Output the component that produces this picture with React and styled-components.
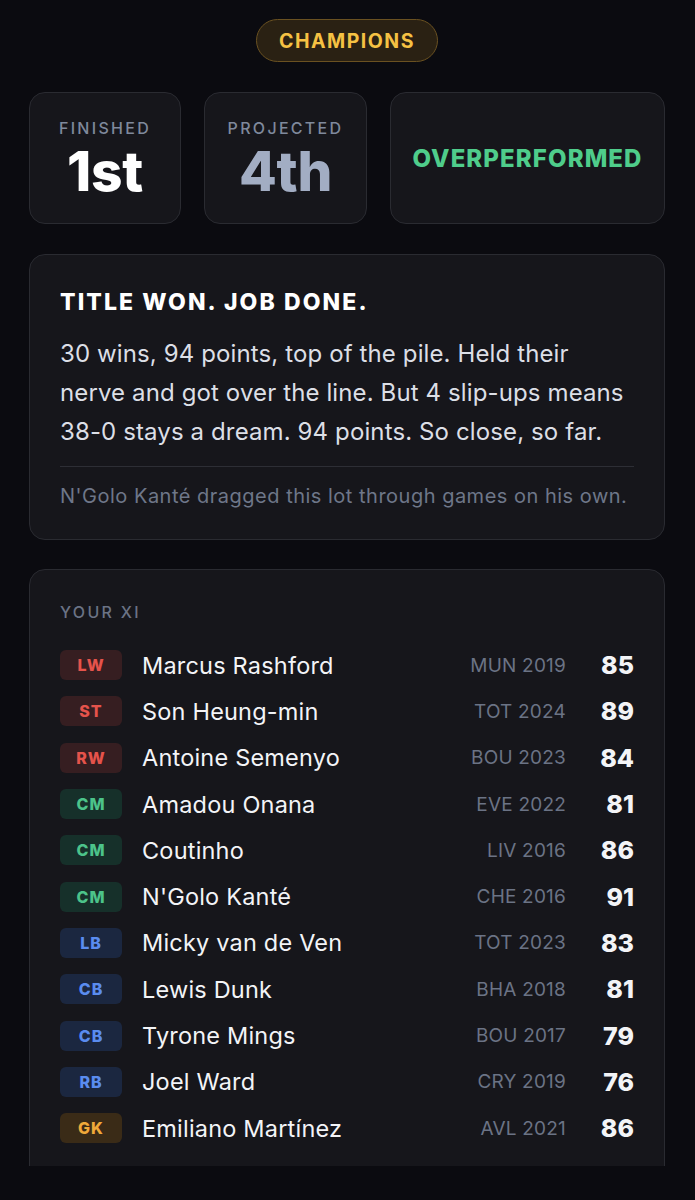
import React from 'react'
import styled, { createGlobalStyle } from 'styled-components'

const GlobalStyle = createGlobalStyle`
  html, body {
    margin: 0;
    padding: 0;
    background: #0b0b10;
  }
  body {
    font-family: Inter, "Noto Sans", "Liberation Sans", sans-serif;
    color: #e6e8ee;
    -webkit-font-smoothing: antialiased;
  }
`

const Viewport = styled.div`
  height: 1166px;
  overflow: hidden;
`

const Page = styled.main`
  padding: 19px 30px 0 29px;
  display: flex;
  flex-direction: column;
  align-items: stretch;
`

const Pill = styled.div`
  align-self: center;
  height: 43px;
  box-sizing: border-box;
  padding: 0 22px;
  display: flex;
  align-items: center;
  border: 1.5px solid #6a5121;
  background: #2a2113;
  border-radius: 22px;
  color: #f5c143;
  font-size: 19.5px;
  font-weight: 700;
  letter-spacing: 1.5px;
`

const StatRow = styled.div`
  margin-top: 30px;
  display: grid;
  grid-template-columns: 152px 163px 1fr;
  gap: 23px;
`

const Card = styled.section`
  background: #16161b;
  border: 1px solid #2a2b31;
  border-radius: 16px;
  box-sizing: border-box;
`

const StatCard = styled(Card)`
  height: 132px;
  display: flex;
  flex-direction: column;
  align-items: center;
  justify-content: center;
`

const StatLabel = styled.div`
  font-size: 16px;
  font-weight: 500;
  letter-spacing: 2.3px;
  color: #7f899c;
  line-height: 20px;
  margin-top: 2px;
`

const StatValue = styled.div`
  font-size: 55px;
  font-weight: 800;
  line-height: 58px;
  letter-spacing: -0.3px;
  margin-top: 4px;
  color: ${p => p.$muted ? '#a2adc3' : '#ffffff'};
`

const Verdict = styled.div`
  font-size: 24px;
  font-weight: 800;
  letter-spacing: 1.1px;
  color: #4fcd8b;
`

const Summary = styled(Card)`
  margin-top: 30px;
  padding: 33px 30px 30px 30px;
`

const Title = styled.h2`
  margin: 0;
  font-size: 23px;
  font-weight: 800;
  letter-spacing: 2.1px;
  color: #ffffff;
  line-height: 28px;
`

const Body = styled.p`
  margin: 18px 0 0;
  font-size: 24px;
  line-height: 39px;
  letter-spacing: 0.12px;
  color: #dcdfe6;
  font-weight: 400;
`

const Divider = styled.hr`
  margin: 15px 0 0;
  border: 0;
  border-top: 1px solid #2d2e35;
`

const Footnote = styled.p`
  margin: 16px 0 0;
  font-size: 20px;
  line-height: 26px;
  letter-spacing: 0.5px;
  white-space: nowrap;
  color: #6e7789;
`

const Squad = styled(Card)`
  margin-top: 29px;
  padding: 31px 30px 40px 30px;
`

const SquadLabel = styled.div`
  font-size: 16px;
  font-weight: 500;
  letter-spacing: 2.3px;
  color: #6b7385;
  line-height: 22px;
`

const List = styled.ul`
  list-style: none;
  margin: 19px 0 0;
  padding: 0;
`

const Row = styled.li`
  height: 46.3px;
  display: flex;
  align-items: center;
`

const tones = {
  red: { bg: '#361e21', fg: '#e5534b' },
  green: { bg: '#16302a', fg: '#4cc38a' },
  blue: { bg: '#1b2740', fg: '#5a8cef' },
  gold: { bg: '#3a2b17', fg: '#f0a93a' },
}

const Badge = styled.span`
  flex: 0 0 62px;
  height: 30px;
  border-radius: 6px;
  display: flex;
  align-items: center;
  justify-content: center;
  font-size: 16px;
  font-weight: 800;
  letter-spacing: 1px;
  background: ${p => tones[p.$tone].bg};
  color: ${p => tones[p.$tone].fg};
`

const Name = styled.span`
  margin-left: 20px;
  flex: 1;
  font-size: 23.5px;
  letter-spacing: 0.2px;
  color: #f3f4f7;
  white-space: nowrap;
`

const Club = styled.span`
  font-size: 19px;
  color: #6b7385;
  letter-spacing: 0.2px;
`

const Rating = styled.span`
  flex: 0 0 68px;
  text-align: right;
  font-size: 25px;
  font-weight: 800;
  color: #f3f4f7;
`

const players = [
  ['LW', 'red', 'Marcus Rashford', 'MUN 2019', 85],
  ['ST', 'red', 'Son Heung-min', 'TOT 2024', 89],
  ['RW', 'red', 'Antoine Semenyo', 'BOU 2023', 84],
  ['CM', 'green', 'Amadou Onana', 'EVE 2022', 81],
  ['CM', 'green', 'Coutinho', 'LIV 2016', 86],
  ['CM', 'green', "N'Golo Kanté", 'CHE 2016', 91],
  ['LB', 'blue', 'Micky van de Ven', 'TOT 2023', 83],
  ['CB', 'blue', 'Lewis Dunk', 'BHA 2018', 81],
  ['CB', 'blue', 'Tyrone Mings', 'BOU 2017', 79],
  ['RB', 'blue', 'Joel Ward', 'CRY 2019', 76],
  ['GK', 'gold', 'Emiliano Martínez', 'AVL 2021', 86],
]

export default function App() {
  return (
    <>
      <GlobalStyle />
      <Viewport>
        <Page>
          <Pill>CHAMPIONS</Pill>

          <StatRow>
            <StatCard>
              <StatLabel>FINISHED</StatLabel>
              <StatValue>1st</StatValue>
            </StatCard>
            <StatCard>
              <StatLabel>PROJECTED</StatLabel>
              <StatValue $muted>4th</StatValue>
            </StatCard>
            <StatCard>
              <Verdict>OVERPERFORMED</Verdict>
            </StatCard>
          </StatRow>

          <Summary>
            <Title>TITLE WON. JOB DONE.</Title>
            <Body>
              30 wins, 94 points, top of the pile. Held their nerve and got over the line. But 4 slip-ups means 38-0 stays a dream. 94 points. So close, so far.
            </Body>
            <Divider />
            <Footnote>N'Golo Kanté dragged this lot through games on his own.</Footnote>
          </Summary>

          <Squad>
            <SquadLabel>YOUR XI</SquadLabel>
            <List>
              {players.map(([pos, tone, name, club, rating]) => (
                <Row key={name}>
                  <Badge $tone={tone}>{pos}</Badge>
                  <Name>{name}</Name>
                  <Club>{club}</Club>
                  <Rating>{rating}</Rating>
                </Row>
              ))}
            </List>
          </Squad>
        </Page>
      </Viewport>
    </>
  )
}
